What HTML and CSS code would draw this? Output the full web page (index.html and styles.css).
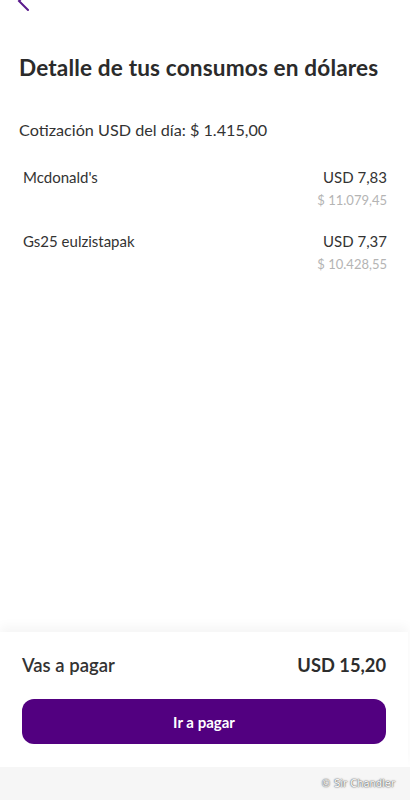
FILE: index.html
```html
<!DOCTYPE html>
<html lang="es">
<head>
<meta charset="utf-8">
<title>Detalle de consumos</title>
<link rel="stylesheet" href="styles.css">
</head>
<body>
<div class="screen">
  <div class="topbar">
    <svg class="back" width="20" height="20" viewBox="0 0 20 20"><path d="M14 -8 L5 1 L14 10" fill="none" stroke="#5a1a8c" stroke-width="2" stroke-linecap="round"/></svg>
  </div>
  <main class="content">
    <h1 class="title">Detalle de tus consumos en dólares</h1>
    <p class="rate">Cotización USD del día: $ 1.415,00</p>
    <ul class="items">
      <li class="item">
        <span class="name">Mcdonald's</span>
        <div class="amounts">
          <span class="usd">USD 7,83</span>
          <span class="ars">$ 11.079,45</span>
        </div>
      </li>
      <li class="item">
        <span class="name">Gs25 eulzistapak</span>
        <div class="amounts">
          <span class="usd">USD 7,37</span>
          <span class="ars">$ 10.428,55</span>
        </div>
      </li>
    </ul>
  </main>
  <footer class="panel">
    <div class="total">
      <span class="total-label">Vas a pagar</span>
      <span class="total-value">USD 15,20</span>
    </div>
    <button class="pay">Ir a pagar</button>
  </footer>
  <div class="navbar"><span class="mark">© Sir Chandler</span></div>
</div>
</body>
</html>
```
FILE: styles.css
```css
* { box-sizing: border-box; }
html, body { margin: 0; padding: 0; }
body {
  width: 410px;
  height: 800px;
  background: #fff;
  font-family: Lato, "Open Sans", sans-serif;
  color: #2d2d2d;
  overflow: hidden;
}
.screen {
  height: 800px;
  display: flex;
  flex-direction: column;
}
.topbar {
  height: 20px;
  padding-left: 14px;
}
.back { display: block; }
.content {
  flex: 1;
  padding: 0 19px;
}
.title {
  margin: 34px 0 0;
  font-size: 22.6px;
  font-weight: 700;
  line-height: 28px;
  letter-spacing: 0.15px;
  color: #2b2b2b;
  white-space: nowrap;
}
.rate {
  margin: 37px 0 0;
  font-size: 16.2px;
  line-height: 22px;
  color: #333;
}
.items {
  list-style: none;
  margin: 26px 0 0;
  padding: 0 4px;
}
.item {
  display: flex;
  justify-content: space-between;
  align-items: flex-start;
  margin-bottom: 22px;
}
.name {
  font-size: 15px;
  line-height: 20px;
  color: #333;
}
.amounts {
  display: flex;
  flex-direction: column;
  align-items: flex-end;
}
.usd {
  font-size: 15px;
  line-height: 20px;
  color: #333;
}
.ars {
  margin-top: 4px;
  font-size: 13px;
  line-height: 18px;
  color: #b4b4b4;
}
.panel {
  height: 135px;
  padding: 20px 22px 0 22px;
  background: #fff;
  box-shadow: 0 -6px 10px rgba(0,0,0,0.04);
  display: flex;
  flex-direction: column;
  margin-right: 2px;
}
.total {
  display: flex;
  justify-content: space-between;
  align-items: center;
  height: 26px;
}
.total-label {
  font-size: 18.5px;
  font-weight: 600;
  color: #333;
}
.total-value {
  font-size: 18.3px;
  font-weight: 700;
  color: #2d2d2d;
}
.pay {
  margin-top: 21px;
  height: 45px;
  border: none;
  border-radius: 12px;
  background: #520080;
  color: #fff;
  font-family: inherit;
  font-size: 15px;
  font-weight: 700;
}
.navbar {
  height: 33px;
  background: #f6f6f6;
  display: flex;
  justify-content: flex-end;
  align-items: center;
  padding-right: 15px;
}
.mark {
  font-family: "DejaVu Sans Condensed", "Liberation Sans Narrow", sans-serif;
  font-size: 11px;
  color: #fff;
  text-shadow: 0 0 2px #555, 0 0 1px #444;
}
```
